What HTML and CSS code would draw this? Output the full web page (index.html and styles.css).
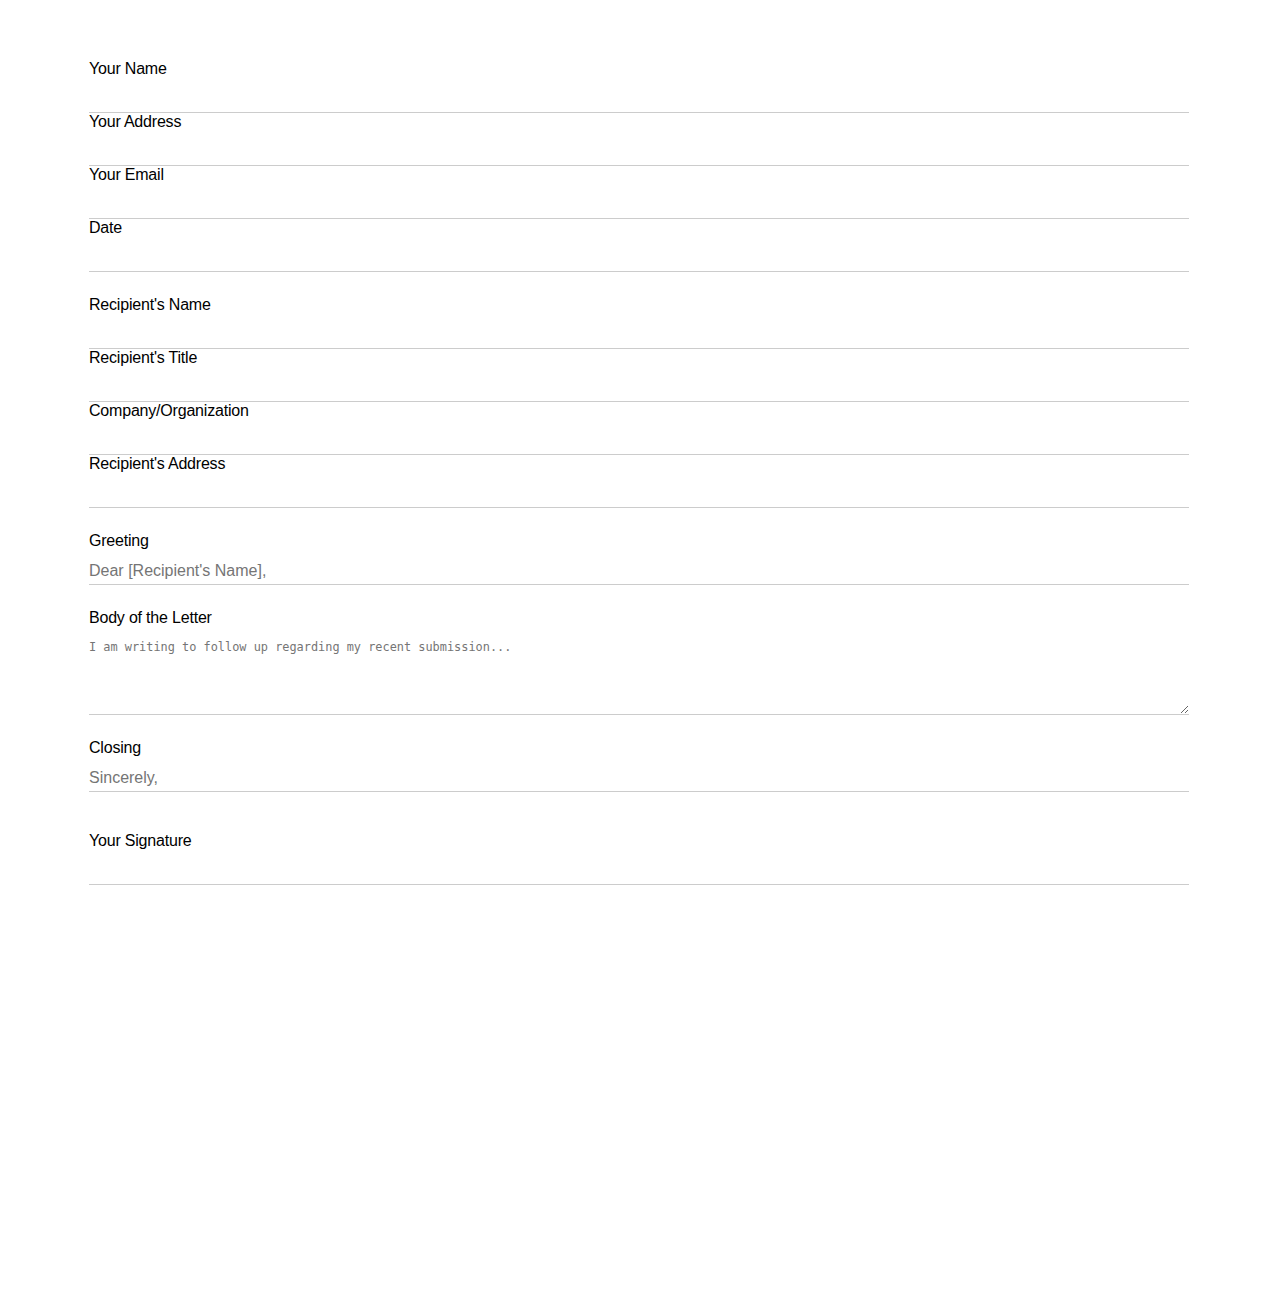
FILE: index.html
```html
<!DOCTYPE html>
<html lang="en">
<head>
<meta charset="utf-8">
<title>Follow-up Letter</title>
<link rel="stylesheet" href="styles.css">
</head>
<body>
<form class="letter">
  <section class="group">
    <div class="field"><label for="yn">Your Name</label><input id="yn" type="text"></div>
    <div class="field"><label for="ya">Your Address</label><input id="ya" type="text"></div>
    <div class="field"><label for="ye">Your Email</label><input id="ye" type="text"></div>
    <div class="field"><label for="dt">Date</label><input id="dt" type="text"></div>
  </section>
  <section class="group">
    <div class="field"><label for="rn">Recipient's Name</label><input id="rn" type="text"></div>
    <div class="field"><label for="rt">Recipient's Title</label><input id="rt" type="text"></div>
    <div class="field"><label for="co">Company/Organization</label><input id="co" type="text"></div>
    <div class="field"><label for="ra">Recipient's Address</label><input id="ra" type="text"></div>
  </section>
  <section class="group">
    <div class="field"><label for="gr">Greeting</label><input id="gr" type="text" placeholder="Dear [Recipient's Name],"></div>
  </section>
  <section class="group">
    <div class="field"><label for="bd">Body of the Letter</label><textarea id="bd" placeholder="I am writing to follow up regarding my recent submission..."></textarea></div>
  </section>
  <section class="group">
    <div class="field"><label for="cl">Closing</label><input id="cl" type="text" placeholder="Sincerely,"></div>
  </section>
  <section class="group signature">
    <div class="field"><label for="sg">Your Signature</label><input id="sg" type="text"></div>
  </section>
</form>
</body>
</html>
```
FILE: styles.css
```css
html, body {
  margin: 0;
  padding: 0;
  background: #fff;
}
body {
  font-family: "Liberation Sans", Arial, sans-serif;
  font-size: 16px;
  color: #000;
}
.letter {
  max-width: 1100px;
  margin: 0 auto;
  padding-top: 36px;
}
.group {
  margin-top: 24px;
}
.group.signature {
  margin-top: 40px;
}
.field {
  display: flex;
  flex-direction: column;
}
.field label {
  display: block;
  height: 18px;
  line-height: 18px;
  margin-bottom: 8px;
  font-size: 16px;
  letter-spacing: -0.2px;
  color: #000;
}
.field input,
.field textarea {
  display: block;
  width: 100%;
  box-sizing: border-box;
  margin: 0;
  border: none;
  border-bottom: 1px solid #ccc;
  outline: none;
  background: transparent;
  color: #000;
}
.field input {
  height: 27px;
  padding: 4px 0;
  font-family: "Liberation Sans", Arial, sans-serif;
  font-size: 16px;
  line-height: 18px;
}
.field textarea {
  height: 80px;
  padding: 5px 0;
  font-family: "DejaVu Sans Mono", monospace;
  font-size: 11.9px;
  resize: vertical;
}
.field input::placeholder,
.field textarea::placeholder {
  color: #757575;
  opacity: 1;
}
```
